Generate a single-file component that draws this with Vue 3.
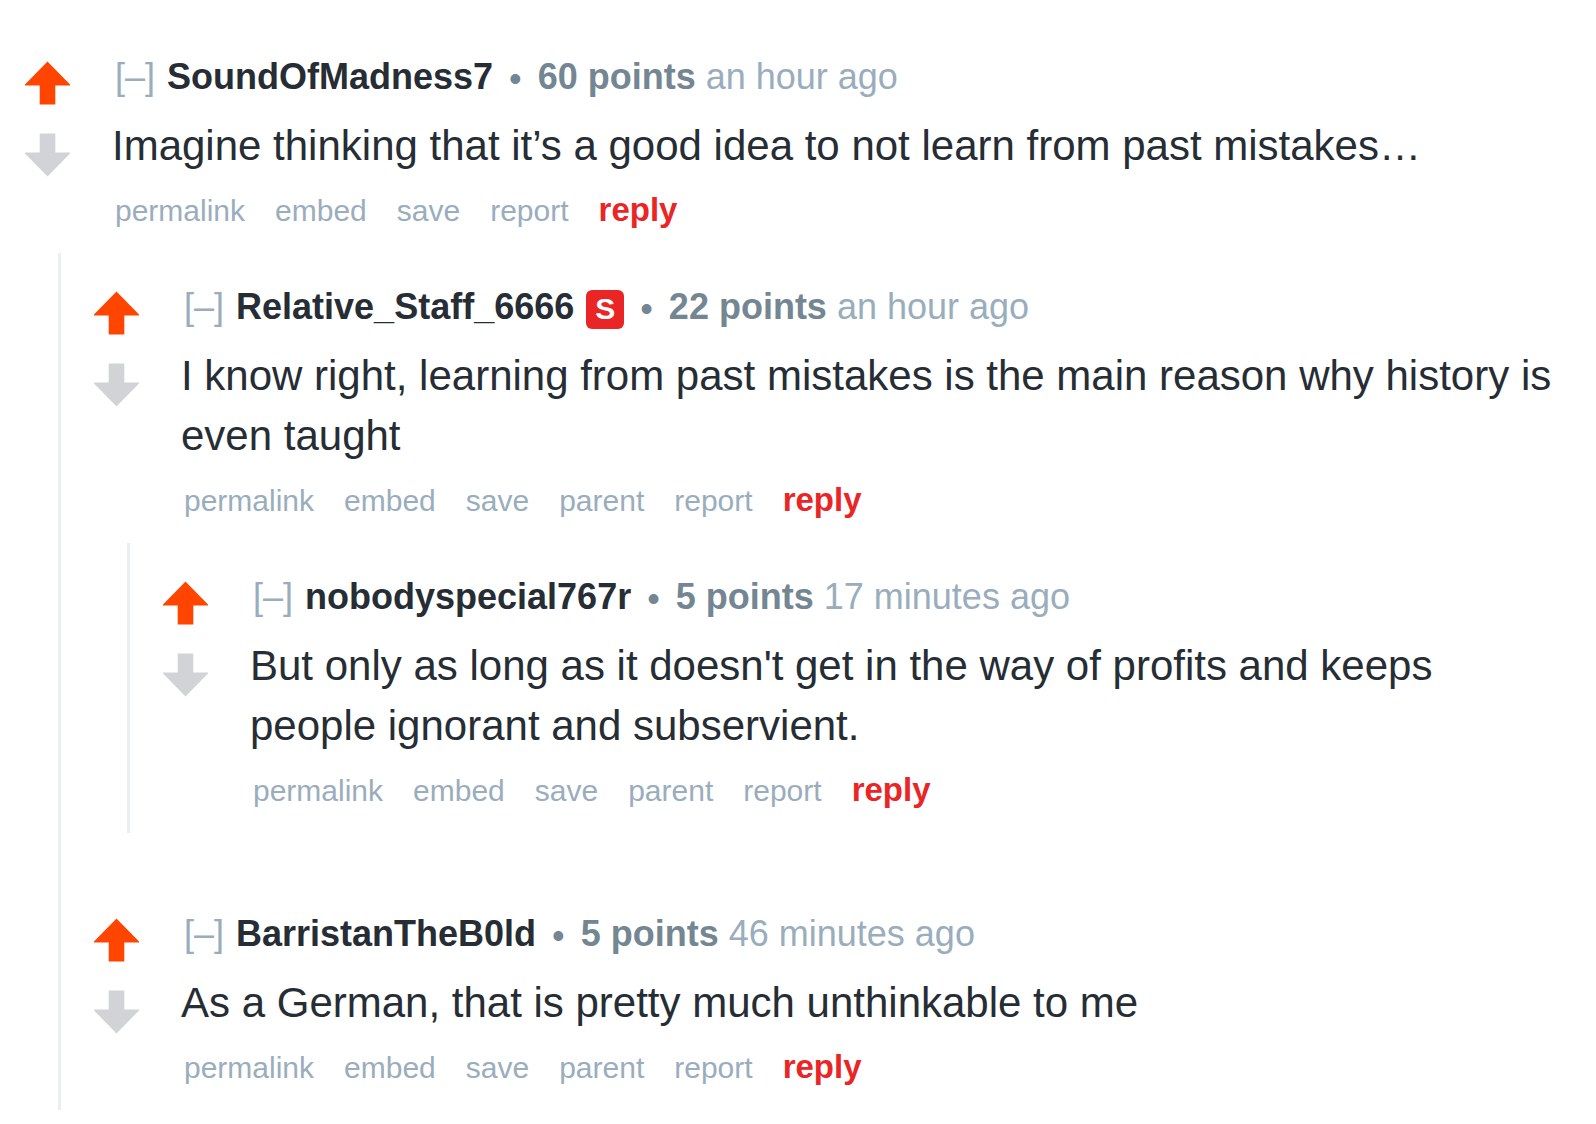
<template>
  <div :class="nested ? 'replies' : 'thread'">
    <article v-for="comment in list" :key="comment.author" class="comment">
      <div class="entry">
        <div class="votes">
          <button class="vote up" type="button" aria-label="Upvote">
            <svg viewBox="0 0 47 44" width="47" height="44">
              <path d="M23.5 0.5 L46 23.5 V24.5 H31.3 V43.5 H15.7 V24.5 H1 V23.5 Z" />
            </svg>
          </button>
          <button class="vote down" type="button" aria-label="Downvote">
            <svg viewBox="0 0 47 44" width="47" height="44">
              <path d="M23.5 43.5 L46 20.5 V19.5 H31.3 V0.5 H15.7 V19.5 H1 V20.5 Z" />
            </svg>
          </button>
        </div>
        <div class="content">
          <header class="tagline">
            <button class="collapse" type="button" aria-label="Collapse comment">[–]</button>
            <a class="author" href="#">{{ comment.author }}</a>
            <span v-if="comment.submitter" class="badge">S</span>
            <span class="dot">•</span>
            <span class="points">{{ comment.points }} points</span>
            <time class="time">{{ comment.time }}</time>
          </header>
          <p class="body">{{ comment.text }}</p>
          <nav class="actions">
            <a href="#">permalink</a>
            <a href="#">embed</a>
            <a href="#">save</a>
            <a v-if="nested" href="#">parent</a>
            <a href="#">report</a>
            <a class="reply" href="#">reply</a>
          </nav>
        </div>
      </div>
      <App v-if="comment.replies" :comments="comment.replies" />
    </article>
  </div>
</template>

<script setup>
import { computed } from 'vue';

// Without comments this is the page itself, with comments it is a list of replies
const props = defineProps({
  comments: { type: Array, default: null }
});

const thread = [
  {
    author: 'SoundOfMadness7',
    points: 60,
    time: 'an hour ago',
    text: 'Imagine thinking that it’s a good idea to not learn from past mistakes…',
    replies: [
      {
        author: 'Relative_Staff_6666',
        submitter: true,
        points: 22,
        time: 'an hour ago',
        text: 'I know right, learning from past mistakes is the main reason why history is even taught',
        replies: [
          {
            author: 'nobodyspecial767r',
            points: 5,
            time: '17 minutes ago',
            text: "But only as long as it doesn't get in the way of profits and keeps people ignorant and subservient."
          }
        ]
      },
      {
        author: 'BarristanTheB0ld',
        points: 5,
        time: '46 minutes ago',
        text: 'As a German, that is pretty much unthinkable to me'
      }
    ]
  }
];

const nested = computed(() => props.comments !== null);
const list = computed(() => props.comments ?? thread);
</script>

<style>
body {
  background: #ffffff;
}
</style>

<style scoped>
.thread {
  padding: 23px 32px 0 24px;
  font-family: "Liberation Sans", Arial, sans-serif;
  color: #262d34;
}

.replies {
  margin-left: 34px;
  padding-left: 32px;
  border-left: 3px solid #ebeff3;
}

.comment + .comment {
  margin-top: 47px;
}

.entry {
  display: flex;
  gap: 41px;
  padding: 33px 0 25px;
}

.votes {
  display: flex;
  flex-direction: column;
  gap: 28px;
  flex: none;
  padding-top: 5px;
}

button {
  margin: 0;
  padding: 0;
  border: none;
  background: none;
  font: inherit;
  color: inherit;
  cursor: pointer;
}

a {
  color: inherit;
  text-decoration: none;
}

.vote {
  display: block;
  height: 44px;
}

.vote svg {
  display: block;
  fill: currentColor;
}

.up {
  color: #ff4500;
}

.down {
  color: #d1d3d7;
}

.content {
  flex: 1;
  min-width: 0;
}

.tagline {
  display: flex;
  align-items: baseline;
  height: 42px;
  padding-left: 3px;
  font-size: 36px;
  line-height: 42px;
  color: #9aadbd;
}

.author {
  margin-left: 12px;
  font-weight: bold;
  color: #262d34;
}

.badge {
  margin-left: 12px;
  padding: 0 9px 1px;
  border-radius: 6px;
  background: #ea2525;
  color: #ffffff;
  font-size: 30px;
  font-weight: bold;
  line-height: 38px;
}

.dot {
  align-self: flex-start;
  margin: 2px 16px 0;
  color: #738692;
}

.points {
  font-weight: bold;
  color: #738692;
}

.time {
  margin-left: 10px;
}

.body {
  margin: 18px 0 15px;
  font-size: 42px;
  line-height: 60px;
}

.actions {
  display: flex;
  align-items: baseline;
  gap: 30px;
  height: 37px;
  padding-left: 3px;
  font-size: 30px;
  line-height: 37px;
  color: #9aadbd;
}

.reply {
  font-size: 33px;
  font-weight: bold;
  color: #ea2525;
}
</style>
